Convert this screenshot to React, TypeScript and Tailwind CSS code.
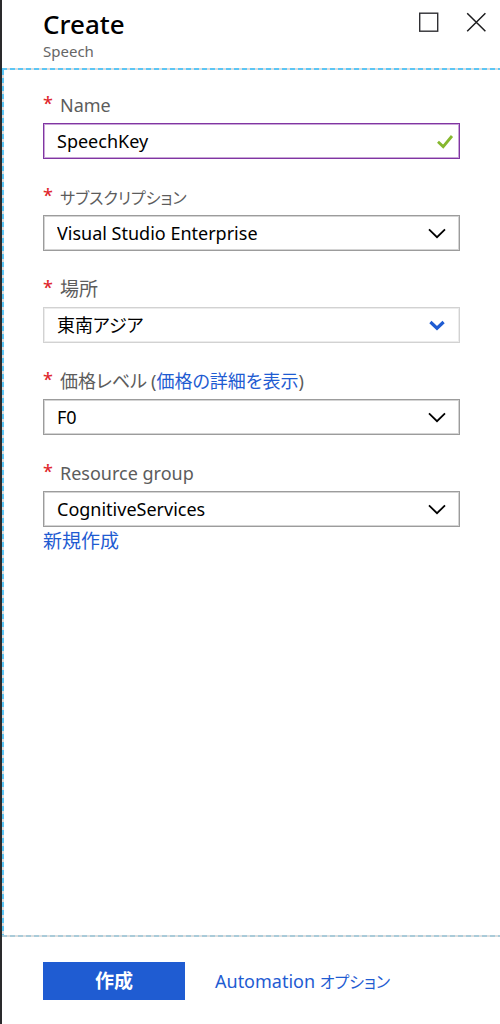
import { useState, type ReactNode } from "react";

function Chevron({ accent = false }: { accent?: boolean }) {
  return (
    <svg
      aria-hidden="true"
      viewBox="0 0 18 12"
      className={
        accent
          ? "pointer-events-none absolute right-[14px] h-3 w-[18px] text-[#1f5cd2]"
          : "pointer-events-none absolute right-[14px] h-3 w-[18px] text-black"
      }
      fill="none"
      stroke="currentColor"
      strokeWidth={accent ? 3.2 : 1.8}
    >
      {accent ? <path d="M2.4 3 9 9.2 15.6 3" /> : <path d="M1 2.4 9 10.2 17 2.4" />}
    </svg>
  );
}

function Field({ id, label, extra, children }: { id: string; label: ReactNode; extra?: ReactNode; children: ReactNode }) {
  return (
    <div>
      <div className="flex h-9 items-center text-lg leading-6 text-[#5c5c5c]">
        <span aria-hidden="true" className="w-[17px] pb-1 text-lg leading-6 font-medium text-[#e0282e]">
          *
        </span>
        <label htmlFor={id}>{label}</label>
        {extra}
      </div>
      <div className="relative flex h-9 items-center">{children}</div>
    </div>
  );
}

function Select({ id, value, accent = false }: { id: string; value: string; accent?: boolean }) {
  return (
    <>
      <select
        id={id}
        defaultValue={value}
        className={
          accent
            ? "h-full w-full appearance-none border border-[#d2d2d2] bg-white pr-10 pl-[13px] text-lg leading-6 text-black shadow-[inset_0_0_0_1px_#ececec]"
            : "h-full w-full appearance-none border border-[#9c9c9c] bg-white pr-10 pl-[13px] text-lg leading-6 text-black shadow-[inset_0_0_0_1px_#d4d4d4]"
        }
      >
        <option>{value}</option>
      </select>
      <Chevron accent={accent} />
    </>
  );
}

export default function App() {
  const [name, setName] = useState("SpeechKey");

  return (
    <div
      lang="ja"
      className="flex min-h-screen flex-col border-l-2 border-[#2a2a2c] bg-white font-['Noto_Sans','Noto_Sans_CJK_JP',sans-serif] [font-feature-settings:'palt']"
    >
      <header className="flex h-[68px] items-start justify-between pr-3 pl-[41px]">
        <div className="pt-2">
          <h1 className="text-[26px] leading-8 font-medium text-black">Create</h1>
          <p className="text-[15px] leading-[22px] text-[#666666]">Speech</p>
        </div>
        <div className="flex gap-[26px] pt-3">
          <button type="button" aria-label="Maximize" className="size-[22px]">
            <svg viewBox="0 0 22 22" className="size-[22px]" fill="none" stroke="#2f2f33" strokeWidth="1.4">
              <rect x="1.7" y="1.2" width="18" height="18" />
            </svg>
          </button>
          <button type="button" aria-label="Close" className="size-[22px]">
            <svg viewBox="0 0 22 22" className="size-[22px]" fill="none" stroke="#1c1c1e" strokeWidth="1.5">
              <path d="M1.2 1.2 19.4 19.2M19.4 1.2 1.2 19.2" />
            </svg>
          </button>
        </div>
      </header>

      <div className="h-[2px] bg-[repeating-linear-gradient(90deg,#5cc6f5_0_5px,#dcdcdc_5px_8px)]" />
      <main className="flex grow">
        <div className="w-[2px] shrink-0 bg-[repeating-linear-gradient(180deg,#5cc6f5_0_5px,#dcdcdc_5px_8px)]" />
        <form className="flex min-w-0 grow flex-col gap-5 pt-[17px] pr-10 pl-[39px]">
          <Field id="name" label="Name">
            <input
              id="name"
              value={name}
              onChange={(e) => setName(e.target.value)}
              className="h-full w-full border border-[#8035a2] bg-white pr-10 pl-[13px] text-lg leading-6 text-black shadow-[inset_0_0_0_1px_#c9a5d8] outline-none"
            />
            <svg
              aria-hidden="true"
              viewBox="0 0 18 16"
              className="pointer-events-none absolute right-[6px] h-4 w-[18px]"
              fill="none"
              stroke="#86b82e"
              strokeWidth="2.8"
            >
              <path d="M2 8.8 7.2 13.6 16 3" />
            </svg>
          </Field>
          <Field id="subscription" label={<span className="text-base leading-6">サブスクリプション</span>}>
            <Select id="subscription" value="Visual Studio Enterprise" />
          </Field>
          <Field id="location" label={<span className="text-[19px] leading-6">場所</span>}>
            <Select id="location" value="東南アジア" accent />
          </Field>
          <Field
            id="tier"
            label="価格レベル"
            extra={
              <span className="ml-1">
                (
                <a href="#pricing" className="text-[#1f5cd2]">
                  価格の詳細を表示
                </a>
                )
              </span>
            }
          >
            <Select id="tier" value="F0" />
          </Field>
          <div>
            <Field id="group" label="Resource group">
              <Select id="group" value="CognitiveServices" />
            </Field>
            <a href="#new" className="inline-block text-[19px] leading-7 text-[#1f5cd2]">
              新規作成
            </a>
          </div>
        </form>
      </main>

      <div className="h-[2px] bg-[repeating-linear-gradient(90deg,#a9cbd9_0_5px,#dedede_5px_8px)]" />
      <footer className="flex items-center gap-[30px] pt-[25px] pr-10 pb-6 pl-[41px]">
        <button type="button" className="h-[38px] w-[142px] bg-[#1f5cd2] text-[19px] leading-6 font-bold text-white">
          作成
        </button>
        <a href="#automation" className="text-lg leading-6 text-[#1f5cd2]">
          Automation <span className="text-base leading-6">オプション</span>
        </a>
      </footer>
    </div>
  );
}
